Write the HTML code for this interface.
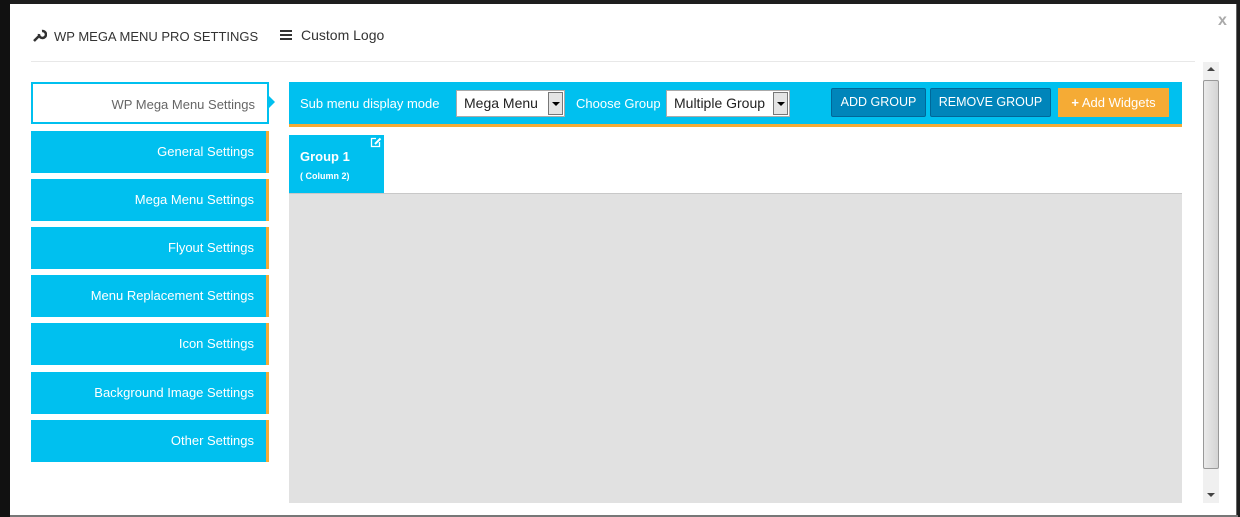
<!DOCTYPE html>
<html><head><style>
*{box-sizing:border-box;margin:0;padding:0}
body{width:1240px;height:517px;background:#1e1e1e;position:relative;overflow:hidden;font-family:"Liberation Sans",sans-serif}
.m{position:absolute;left:10px;top:4px;width:1227px;height:511px;background:#fff;border-right:1px solid #666}
.abs{position:absolute}
.side{position:absolute;left:31px;width:238px;height:42px;background:#00c0ef;border-right:3px solid #f5ab35;color:#fff;font-size:13px;text-align:right;padding-right:12px;line-height:42px}
.btn{position:absolute;top:88px;height:29px;background:#0085ba;border:1px solid #006799;border-radius:2px;color:#fff;font-size:12.5px;line-height:27px;text-align:center}
.sel{position:absolute;top:90px;height:27px;background:#fff;border:1px solid #aaa;font-size:14px;color:#222;line-height:25px;padding-left:7px}
.sel i{position:absolute;right:1px;top:1px;width:15px;height:23px;background:#e4e4e4;border:1px solid #777}
.sel i:after{content:"";position:absolute;left:3px;top:9px;border:4px solid transparent;border-top:4px solid #000}
</style></head><body>
<div class="abs" style="left:0;top:0;width:10px;height:517px;background:#111"></div>
<div class="m"></div>
<div class="abs" style="left:1218px;top:12px;color:#aaa;font-weight:bold;font-size:16px">x</div>
<svg class="abs" style="left:33px;top:28px" width="14" height="14" viewBox="0 0 14 14"><path d="M1 13 L7 7 M6 6 A3.5 3.5 0 1 0 9 3" stroke="#333" stroke-width="2.5" fill="none"/></svg>
<div class="abs" style="left:54px;top:29px;font-size:13px;color:#333">WP MEGA MENU PRO SETTINGS</div>
<div class="abs" style="left:280px;top:30px;width:12px;height:2px;background:#333;box-shadow:0 4px 0 #333,0 8px 0 #333"></div>
<div class="abs" style="left:301px;top:27px;font-size:14px;color:#333">Custom Logo</div>
<div class="abs" style="left:31px;top:61px;width:1164px;height:1px;background:#e8e8e8"></div>

<div class="side" style="top:82px;background:#fff;border:2px solid #00c0ef;color:#666">WP Mega Menu Settings</div>
<div class="abs" style="left:269px;top:96px;border:6px solid transparent;border-left:6px solid #00c0ef"></div>
<div class="side" style="top:131px">General Settings</div>
<div class="side" style="top:179px">Mega Menu Settings</div>
<div class="side" style="top:227px">Flyout Settings</div>
<div class="side" style="top:275px">Menu Replacement Settings</div>
<div class="side" style="top:323px">Icon Settings</div>
<div class="side" style="top:372px">Background Image Settings</div>
<div class="side" style="top:420px">Other Settings</div>

<div class="abs" style="left:289px;top:82px;width:893px;height:45px;background:#00c0ef;border-bottom:3px solid #f5ab35"></div>
<div class="abs" style="left:300px;top:96px;color:#fff;font-size:13px">Sub menu display mode</div>
<div class="sel" style="left:456px;width:109px">Mega Menu<i></i></div>
<div class="abs" style="left:576px;top:96px;color:#fff;font-size:13px">Choose Group</div>
<div class="sel" style="left:666px;width:124px">Multiple Group<i></i></div>
<div class="btn" style="left:831px;width:95px">ADD GROUP</div>
<div class="btn" style="left:930px;width:121px">REMOVE GROUP</div>
<div class="btn" style="left:1058px;width:111px;background:#f5ab35;border-color:#f5ab35;border-radius:0;font-size:13px"><b>+</b> Add Widgets</div>

<div class="abs" style="left:289px;top:135px;width:95px;height:58px;background:#00c0ef;color:#fff">
<div style="position:absolute;left:11px;top:14px;font-size:13px;font-weight:bold">Group 1</div>
<div style="position:absolute;left:11px;top:36px;font-size:9px;font-weight:bold">( Column 2)</div>
<svg style="position:absolute;right:2px;top:2px" width="12" height="11" viewBox="0 0 12 11"><path d="M6 1.5H1.5V9.5H9.5V5" stroke="#fff" stroke-width="1.3" fill="none"/><path d="M5 7 L10.5 1.5" stroke="#fff" stroke-width="2"/></svg>
</div>
<div class="abs" style="left:289px;top:193px;width:893px;height:1px;background:#c8c8c8"></div>
<div class="abs" style="left:289px;top:194px;width:893px;height:309px;background:#e1e1e1"></div>

<div class="abs" style="left:1203px;top:62px;width:16px;height:441px;background:#f0f0f0"></div>
<div class="abs" style="left:1203px;top:80px;width:16px;height:389px;background:linear-gradient(90deg,#eaeaea,#d4d4d4);border:1px solid #999;border-radius:2px"></div>
<div class="abs" style="left:1207px;top:67px;border:4px solid transparent;border-bottom:4px solid #444;border-top:0"></div>
<div class="abs" style="left:1207px;top:493px;border:4px solid transparent;border-top:4px solid #444;border-bottom:0"></div>
<div class="abs" style="left:10px;top:515px;width:1228px;height:2px;background:#777"></div>
</body></html>
